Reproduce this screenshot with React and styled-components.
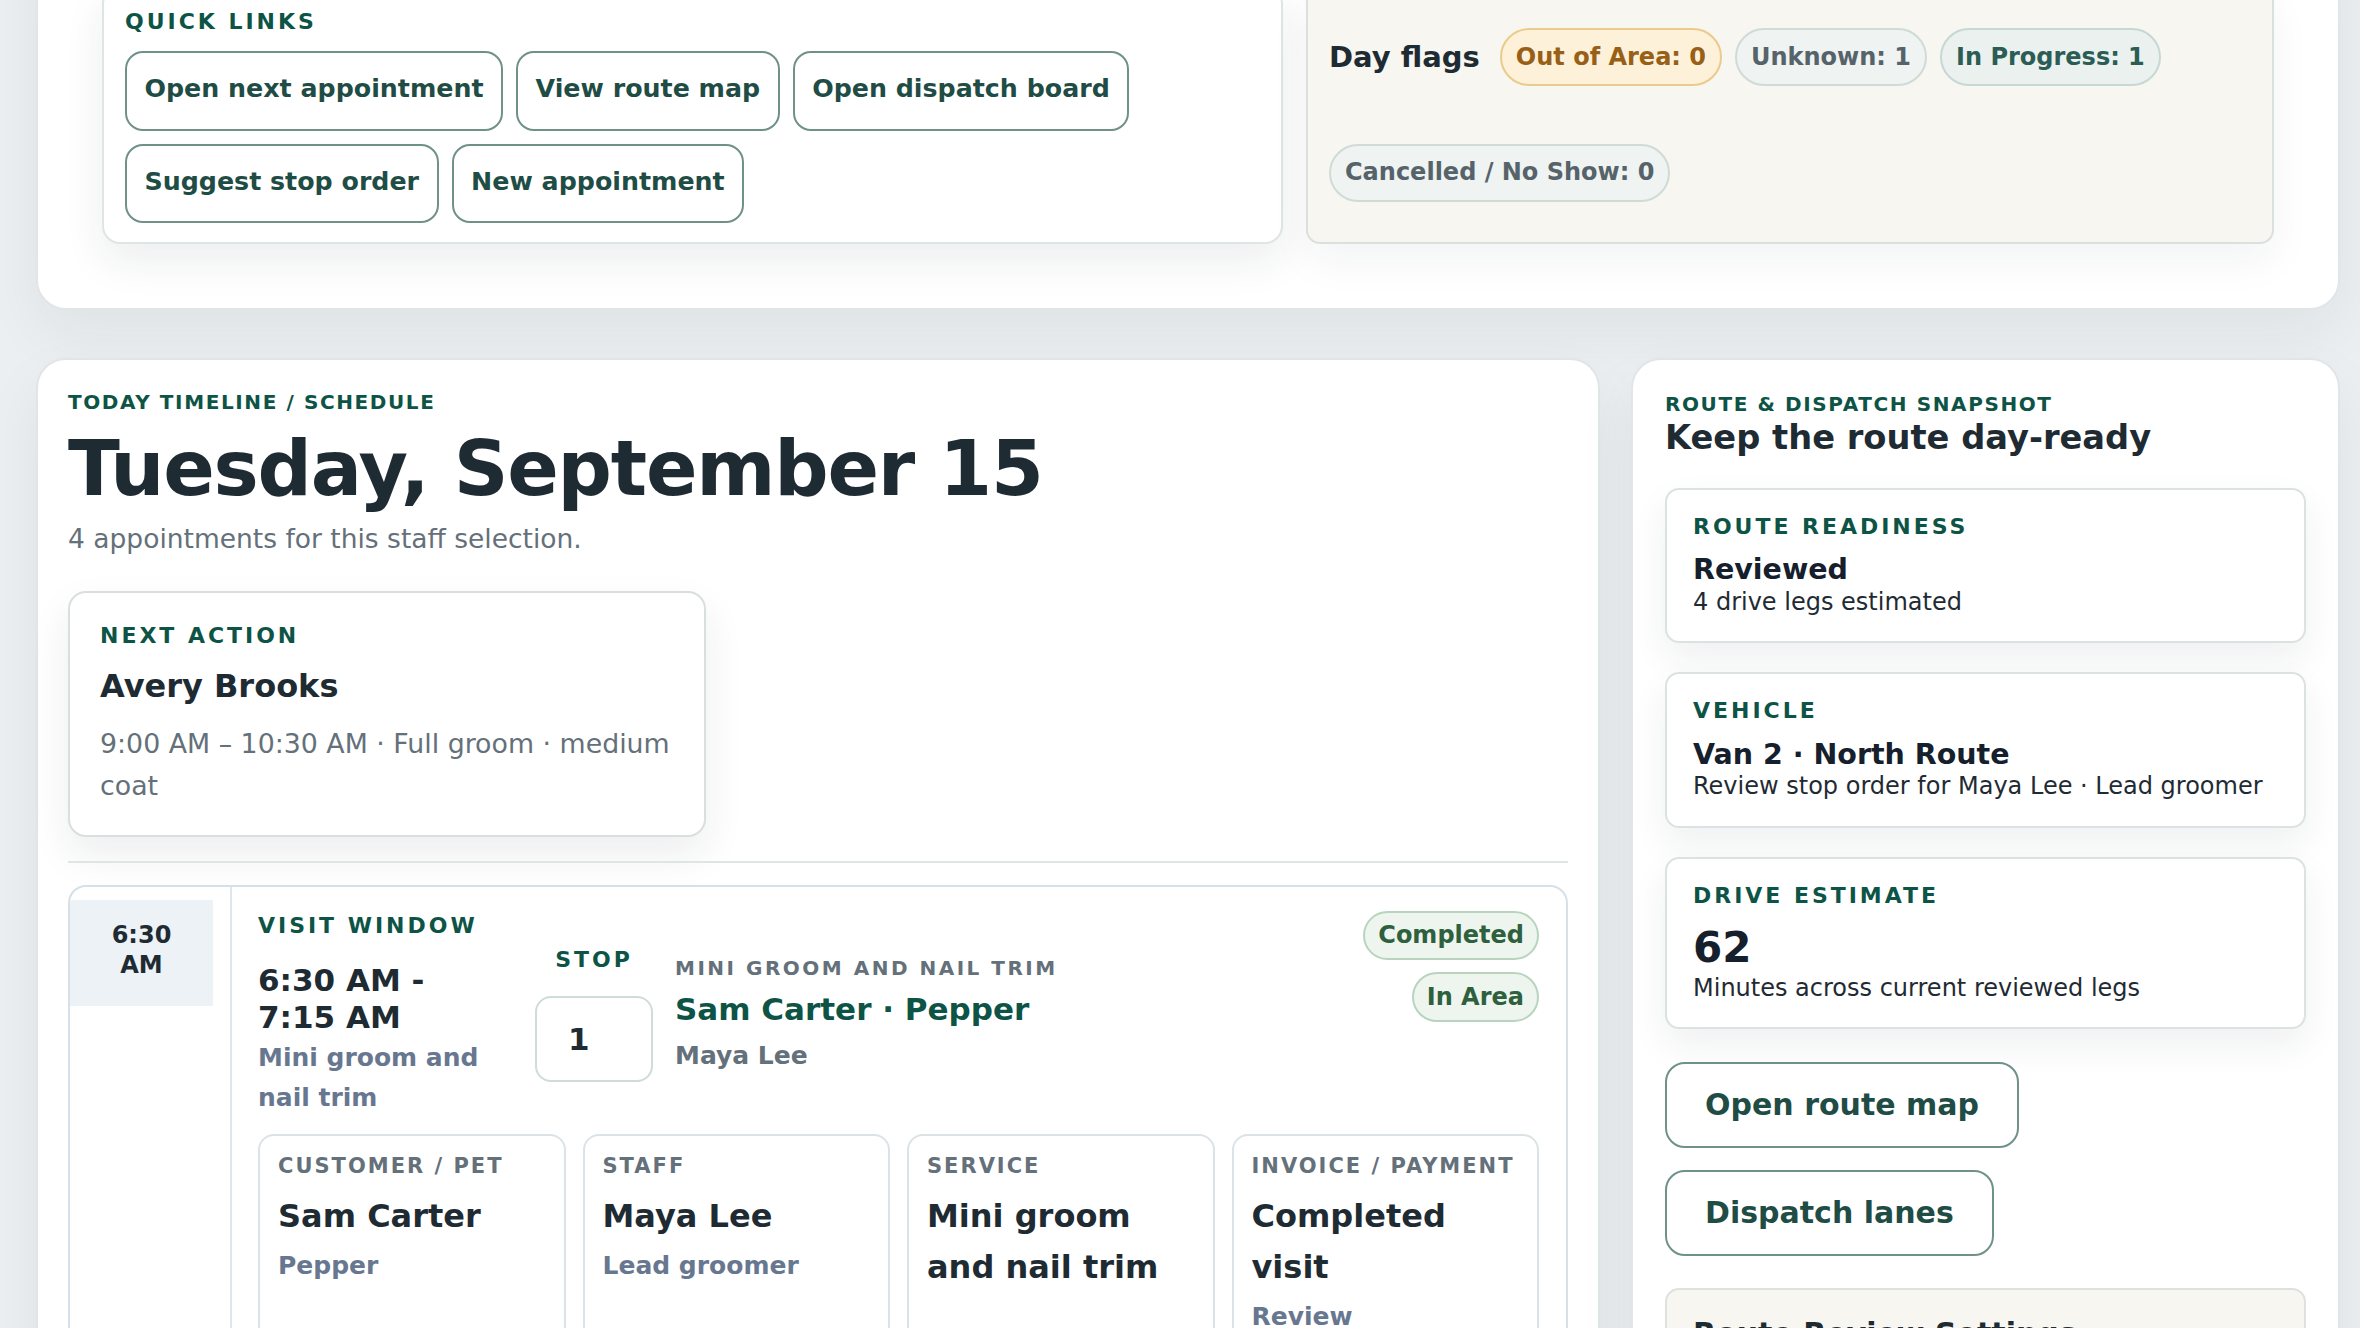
import styled, { createGlobalStyle } from "styled-components";

const GlobalStyle = createGlobalStyle`
  * { box-sizing: border-box; }
  html, body {
    margin: 0;
    padding: 0;
    background: #eceff1;
    overflow: hidden;
  }
  body {
    font-family: "DejaVu Sans", "Liberation Sans", sans-serif;
    color: #1f2b33;
  }
`;

const quickLinks = [
  "Open next appointment",
  "View route map",
  "Open dispatch board",
  "Suggest stop order",
  "New appointment",
];

const dayFlags = [
  { label: "Out of Area: 0", tone: "warn" },
  { label: "Unknown: 1", tone: "muted" },
  { label: "In Progress: 1", tone: "teal" },
  { label: "Cancelled / No Show: 0", tone: "muted" },
];

const visitFacts = [
  { label: "Customer / Pet", value: "Sam Carter", note: "Pepper" },
  { label: "Staff", value: "Maya Lee", note: "Lead groomer" },
  { label: "Service", value: "Mini groom and nail trim" },
  { label: "Invoice / Payment", value: "Completed visit", note: "Review" },
];

const snapshot = [
  { label: "Route readiness", value: "Reviewed", desc: "4 drive legs estimated" },
  {
    label: "Vehicle",
    value: "Van 2 · North Route",
    desc: "Review stop order for Maya Lee · Lead groomer",
  },
  { label: "Drive estimate", value: "62", desc: "Minutes across current reviewed legs", big: true },
];

const flagTones = {
  warn: { bg: "#fdf1da", border: "#ebcb8c", color: "#985f17" },
  muted: { bg: "#eff3f1", border: "#d0dbd8", color: "#56636a" },
  teal: { bg: "#ebf1ef", border: "#c7d8d4", color: "#2c5d54" },
};

export default function App() {
  return (
    <>
      <GlobalStyle />
      <Page>
        <TopCard>
          <LinksCard>
            <CardEyebrow>Quick links</CardEyebrow>
            <LinkRow>
              {quickLinks.map((l) => (
                <LinkButton key={l}>{l}</LinkButton>
              ))}
            </LinkRow>
          </LinksCard>
          <FlagsPanel>
            <FlagRow>
              <FlagsTitle>Day flags</FlagsTitle>
              {dayFlags.map((f) => (
                <FlagPill key={f.label} $tone={f.tone}>
                  {f.label}
                </FlagPill>
              ))}
            </FlagRow>
          </FlagsPanel>
        </TopCard>

        <MainGrid>
          <TimelineCard>
            <SectionEyebrow>Today timeline / schedule</SectionEyebrow>
            <DayHeading>Tuesday, September 15</DayHeading>
            <DaySub>4 appointments for this staff selection.</DaySub>

            <NextCard>
              <CardEyebrow>Next action</CardEyebrow>
              <NextName>Avery Brooks</NextName>
              <NextMeta>9:00 AM – 10:30 AM · Full groom · medium coat</NextMeta>
            </NextCard>

            <Divider />

            <VisitCard>
              <TimeRail>
                <TimeChip>
                  6:30
                  <br />
                  AM
                </TimeChip>
              </TimeRail>
              <VisitBody>
                <VisitTop>
                  <VisitWindow>
                    <CardEyebrow>Visit window</CardEyebrow>
                    <VisitTime>6:30 AM - 7:15 AM</VisitTime>
                    <VisitService>Mini groom and nail trim</VisitService>
                  </VisitWindow>
                  <StopCol>
                    <CardEyebrow>Stop</CardEyebrow>
                    <StopInput>1</StopInput>
                  </StopCol>
                  <VisitInfo>
                    <InfoEyebrow>Mini groom and nail trim</InfoEyebrow>
                    <InfoTitle>Sam Carter · Pepper</InfoTitle>
                    <InfoStaff>Maya Lee</InfoStaff>
                  </VisitInfo>
                  <Badges>
                    <StatusBadge>Completed</StatusBadge>
                    <StatusBadge>In Area</StatusBadge>
                  </Badges>
                </VisitTop>
                <FactGrid>
                  {visitFacts.map((f) => (
                    <FactCard key={f.label}>
                      <FactLabel>{f.label}</FactLabel>
                      <FactValue>{f.value}</FactValue>
                      {f.note && <FactNote>{f.note}</FactNote>}
                    </FactCard>
                  ))}
                </FactGrid>
              </VisitBody>
            </VisitCard>
          </TimelineCard>

          <RouteCard>
            <SectionEyebrow>Route &amp; dispatch snapshot</SectionEyebrow>
            <RouteHeading>Keep the route day-ready</RouteHeading>
            <SnapStack>
              {snapshot.map((s) => (
                <SnapCard key={s.label}>
                  <CardEyebrow>{s.label}</CardEyebrow>
                  <SnapValue $big={s.big}>{s.value}</SnapValue>
                  <SnapDesc>{s.desc}</SnapDesc>
                </SnapCard>
              ))}
            </SnapStack>
            <RouteActions>
              <RouteButton>Open route map</RouteButton>
              <RouteButton>Dispatch lanes</RouteButton>
            </RouteActions>
            <SettingsCard>
              <SettingsTitle>Route Review Settings</SettingsTitle>
              <SnapDesc>Travel buffers and service area rules</SnapDesc>
            </SettingsCard>
          </RouteCard>
        </MainGrid>
      </Page>
    </>
  );
}

const Page = styled.div`
  height: 100vh;
  overflow: hidden;
  padding: 0 20px 0 36px;
`;

/* shared text styles */

const CardEyebrow = styled.div`
  font-size: 22px;
  line-height: 1.2;
  font-weight: 700;
  letter-spacing: 0.135em;
  text-transform: uppercase;
  color: #0d5446;
`;

const SectionEyebrow = styled.div`
  font-size: 20px;
  line-height: 1.2;
  font-weight: 700;
  letter-spacing: 0.08em;
  text-transform: uppercase;
  color: #0d5446;
`;

/* top strip: quick links + day flags */

const TopCard = styled.section`
  margin-top: -80px;
  background: #fff;
  border: 2px solid #e0e5e8;
  border-radius: 30px;
  padding: 64px;
  box-shadow: 0 24px 60px rgba(28, 40, 52, 0.06);
  display: grid;
  grid-template-columns: minmax(0, 1181fr) minmax(0, 968fr);
  gap: 23px;
`;

const LinksCard = styled.div`
  background: #fff;
  border: 2px solid #dfe4e5;
  border-radius: 18px;
  padding: 21px 21px 18px;
  box-shadow: 0 18px 40px rgba(28, 40, 52, 0.08);

  ${CardEyebrow} {
    margin-bottom: 16px;
  }
`;

const LinkRow = styled.div`
  display: flex;
  flex-wrap: wrap;
  gap: 13px;
`;

const LinkButton = styled.button`
  font-family: inherit;
  font-size: 25.3px;
  line-height: 1.2;
  font-weight: 700;
  color: #1f4d45;
  background: #fff;
  border: 2px solid #6f918a;
  border-radius: 18px;
  padding: 21px 17.5px 24px;
`;

const FlagsPanel = styled.div`
  background: #f7f6f0;
  border: 2px solid #d9e0de;
  border-radius: 14px;
  padding: 40px 21px;
  box-shadow: 0 18px 40px rgba(28, 40, 52, 0.05);
`;

const FlagRow = styled.div`
  display: flex;
  flex-wrap: wrap;
  align-items: center;
  column-gap: 13px;
  row-gap: 58px;
`;

const FlagsTitle = styled.h3`
  margin: 0 7px 0 0;
  font-size: 29px;
  line-height: 1.2;
  font-weight: 700;
  color: #1f2b33;
`;

const FlagPill = styled.span`
  font-size: 24px;
  line-height: 1.2;
  font-weight: 700;
  padding: 12.5px 14px;
  border-radius: 999px;
  border: 2px solid ${(p) => flagTones[p.$tone].border};
  background: ${(p) => flagTones[p.$tone].bg};
  color: ${(p) => flagTones[p.$tone].color};
`;

/* lower area */

const MainGrid = styled.div`
  margin-top: 48px;
  display: grid;
  grid-template-columns: minmax(0, 1564fr) minmax(0, 709fr);
  gap: 31px;
  align-items: start;
`;

const TimelineCard = styled.section`
  background: #fff;
  border: 2px solid #e0e5e8;
  border-radius: 30px;
  padding: 30px;
  box-shadow: 0 24px 60px rgba(28, 40, 52, 0.06);
`;

const DayHeading = styled.h1`
  margin: 13px 0 0;
  font-size: 76px;
  line-height: 1.1;
  font-weight: 700;
  letter-spacing: -0.016em;
  color: #1f2b33;
`;

const DaySub = styled.p`
  margin: 9px 0 0;
  font-size: 26.5px;
  line-height: 39px;
  color: #64707a;
`;

const NextCard = styled.div`
  width: 638px;
  margin-top: 32.5px;
  background: #fff;
  border: 2px solid #d9dfe0;
  border-radius: 18px;
  padding: 30px 30px 27px;
  box-shadow: 0 18px 40px rgba(28, 40, 52, 0.08);
`;

const NextName = styled.div`
  margin-top: 17px;
  font-size: 32px;
  line-height: 1.25;
  font-weight: 700;
  color: #1f2b33;
`;

const NextMeta = styled.div`
  margin-top: 16.5px;
  font-size: 26.8px;
  line-height: 42.5px;
  color: #64707a;
`;

const Divider = styled.hr`
  margin: 24px 0 22px;
  border: 0;
  height: 2px;
  background: #dfe4e7;
`;

const VisitCard = styled.article`
  display: grid;
  grid-template-columns: 160px 1fr;
  border: 2px solid #d6e0e8;
  border-radius: 18px;
  background: #fff;
`;

const TimeRail = styled.div`
  padding-top: 13px;
`;

const TimeChip = styled.div`
  width: 143px;
  padding: 20px 0 26px;
  background: #edf2f6;
  text-align: center;
  font-size: 24px;
  line-height: 30px;
  font-weight: 700;
  color: #1f2b33;
`;

const VisitBody = styled.div`
  border-left: 2px solid #e0e6ea;
  padding: 24px 27px 30px 26px;
`;

const VisitTop = styled.div`
  display: grid;
  grid-template-columns: 240px 133px 1fr auto;
  column-gap: 22px;
  align-items: center;
`;

const VisitWindow = styled.div`
  padding-top: 2px;
`;

const VisitTime = styled.div`
  margin-top: 23px;
  font-size: 31px;
  line-height: 1.2;
  font-weight: 700;
  color: #1f2b33;
`;

const VisitService = styled.div`
  margin-top: 2px;
  font-size: 25px;
  line-height: 40px;
  font-weight: 700;
  color: #687790;
`;

const StopCol = styled.div`
  justify-self: end;
  display: flex;
  flex-direction: column;
  align-items: center;
  gap: 23px;
`;

const StopInput = styled.div`
  width: 118px;
  height: 86px;
  display: flex;
  align-items: center;
  padding-left: 31px;
  border: 2px solid #cfdcd8;
  border-radius: 16px;
  font-size: 31px;
  font-weight: 700;
  color: #1f2b33;
`;

const VisitInfo = styled.div``;

const InfoEyebrow = styled.div`
  font-size: 20px;
  line-height: 1.2;
  font-weight: 700;
  letter-spacing: 0.125em;
  text-transform: uppercase;
  color: #64707a;
`;

const InfoTitle = styled.div`
  margin-top: 9px;
  font-size: 31px;
  line-height: 1.3;
  font-weight: 700;
  color: #0d5446;
`;

const InfoStaff = styled.div`
  margin-top: 9px;
  font-size: 25px;
  line-height: 1.4;
  font-weight: 700;
  color: #64707a;
`;

const Badges = styled.div`
  align-self: start;
  display: flex;
  flex-direction: column;
  align-items: flex-end;
  gap: 12px;
`;

const StatusBadge = styled.span`
  font-size: 24px;
  line-height: 1.2;
  font-weight: 700;
  padding: 8.5px 13px;
  border-radius: 999px;
  border: 2px solid #b9d4be;
  background: #edf5ee;
  color: #2f603e;
`;

const FactGrid = styled.div`
  margin-top: 16px;
  display: grid;
  grid-template-columns: repeat(4, minmax(0, 1fr));
  gap: 17px;
`;

const FactCard = styled.div`
  border: 2px solid #dbe3e7;
  border-radius: 16px;
  padding: 17.5px 18px 24px;
`;

const FactLabel = styled.div`
  font-size: 21px;
  line-height: 1.2;
  font-weight: 700;
  letter-spacing: 0.095em;
  text-transform: uppercase;
  color: #64707a;
`;

const FactValue = styled.div`
  margin-top: 11.5px;
  font-size: 32px;
  line-height: 1.6;
  font-weight: 700;
  color: #1f2b33;
`;

const FactNote = styled.div`
  margin-top: 4px;
  font-size: 25px;
  line-height: 1.6;
  font-weight: 700;
  color: #687790;
`;

/* route column */

const RouteCard = styled.aside`
  background: #fff;
  border: 2px solid #e0e5e8;
  border-radius: 30px;
  padding: 32px;
  box-shadow: 0 24px 60px rgba(28, 40, 52, 0.06);
`;

const RouteHeading = styled.h2`
  margin: 2px 0 0;
  font-size: 33.7px;
  line-height: 1.2;
  font-weight: 700;
  color: #1f2b33;
`;

const SnapStack = styled.div`
  margin-top: 30px;
  display: flex;
  flex-direction: column;
  gap: 29px;
`;

const SnapCard = styled.div`
  background: #fff;
  border: 2px solid #dce2e2;
  border-radius: 14px;
  padding: 24px 26px 25px;
  box-shadow: 0 16px 36px rgba(28, 40, 52, 0.07);
`;

const SnapValue = styled.div`
  margin-top: ${(p) => (p.$big ? "14px" : "13px")};
  font-size: ${(p) => (p.$big ? "42px" : "28.5px")};
  line-height: 1.2;
  font-weight: 700;
  color: #15202c;
`;

const SnapDesc = styled.div`
  font-size: 24px;
  line-height: 1.2;
  color: #1f2b33;
`;

const RouteActions = styled.div`
  margin-top: 33px;
  display: flex;
  flex-wrap: wrap;
  gap: 22px;
`;

const RouteButton = styled.button`
  font-family: inherit;
  font-size: 30px;
  line-height: 1.2;
  font-weight: 700;
  color: #1f4d45;
  background: #fff;
  border: 2px solid #6f918a;
  border-radius: 20px;
  padding: 23px 38px;
`;

const SettingsCard = styled.div`
  margin-top: 32px;
  background: #f7f6f0;
  border: 2px solid #dde2df;
  border-radius: 14px;
  padding: 26px;
`;

const SettingsTitle = styled.div`
  font-size: 30px;
  line-height: 1.2;
  font-weight: 700;
  color: #1f2b33;
  margin-bottom: 8px;
`;
